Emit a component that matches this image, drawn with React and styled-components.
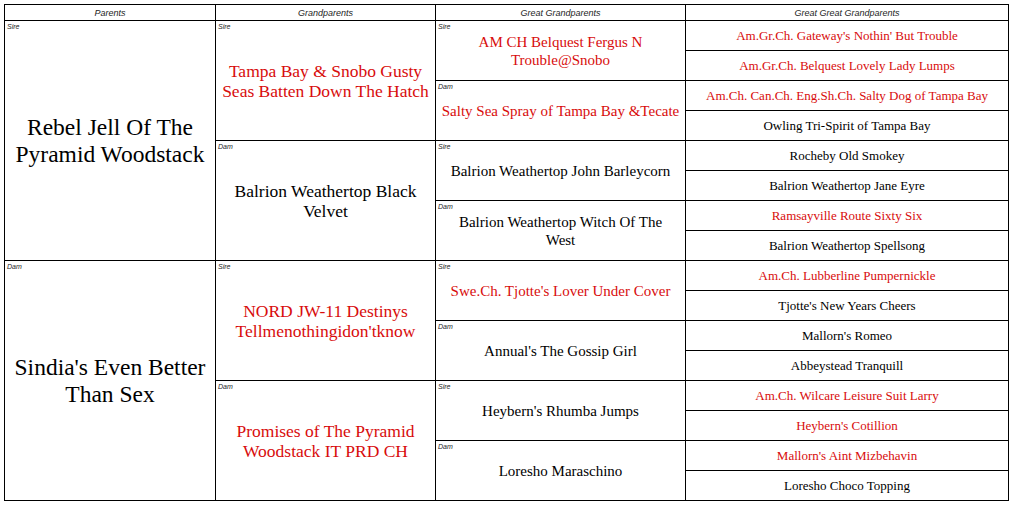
import React from "react";
import styled, { createGlobalStyle } from "styled-components";

const Global = createGlobalStyle`
  html, body { margin: 0; padding: 0; background: #fff; }
  body { padding: 4px; font-family: "Liberation Serif", "Times New Roman", serif; }
`;

const WIDTHS = [211, 220, 250, 323];
const FONT = [
  { size: 23.5, lh: 27 },
  { size: 17.5, lh: 20 },
  { size: 15, lh: 18 },
  { size: 13, lh: 16 },
];

const Table = styled.div`
  display: flex;
  flex-direction: column;
  width: 1005px;
  box-sizing: border-box;
  border-left: 1px solid #000;
  border-top: 1px solid #000;
`;

const HeaderRow = styled.div`
  display: grid;
  grid-template-columns: ${WIDTHS.map((w) => w + "px").join(" ")};
  height: 16px;
`;

const HeaderCell = styled.div`
  box-sizing: border-box;
  border-right: 1px solid #000;
  border-bottom: 1px solid #000;
  display: flex;
  align-items: center;
  justify-content: center;
  font-family: "Liberation Sans", Arial, sans-serif;
  font-style: italic;
  font-size: 9px;
  color: #222;
`;

const BranchRow = styled.div`
  display: flex;
  flex-direction: row;
`;

const Children = styled.div`
  display: flex;
  flex-direction: column;
`;

const Cell = styled.div`
  position: relative;
  box-sizing: border-box;
  flex: none;
  width: ${(p) => WIDTHS[p.$gen]}px;
  ${(p) => (p.$gen === 3 ? "height: 30px;" : "")}
  border-right: 1px solid #000;
  border-bottom: 1px solid #000;
  display: flex;
  align-items: center;
  justify-content: center;
  text-align: center;
  white-space: pre-line;
  padding: 0 ${(p) => (p.$gen === 2 ? 2 : 4)}px;
  font-family: "Liberation Serif", "Times New Roman", serif;
  font-size: ${(p) => FONT[p.$gen].size}px;
  line-height: ${(p) => FONT[p.$gen].lh}px;
  color: ${(p) => (p.$red ? "#d80c0c" : "#000")};
`;

const Name = styled.span`
  font-family: "Liberation Serif", "Times New Roman", serif;
`;

const Label = styled.span`
  position: absolute;
  top: 2px;
  left: 2px;
  font-family: "Liberation Sans", Arial, sans-serif;
  font-style: italic;
  font-size: 7px;
  line-height: 8px;
  color: #222;
`;

const n = (name, red, children) => ({ name, red, children });

const tree = [
  n("Rebel Jell Of The Pyramid Woodstack", false, [
    n("Tampa Bay & Snobo Gusty Seas Batten Down The Hatch", true, [
      n("AM CH Belquest Fergus N Trouble@Snobo", true, [
        n("Am.Gr.Ch. Gateway's Nothin' But Trouble", true),
        n("Am.Gr.Ch. Belquest Lovely Lady Lumps", true),
      ]),
      n("Salty Sea Spray of Tampa Bay &Tecate", true, [
        n("Am.Ch. Can.Ch. Eng.Sh.Ch. Salty Dog of Tampa Bay", true),
        n("Owling Tri-Spirit of Tampa Bay", false),
      ]),
    ]),
    n("Balrion Weathertop Black Velvet", false, [
      n("Balrion Weathertop John Barleycorn", false, [
        n("Rocheby Old Smokey", false),
        n("Balrion Weathertop Jane Eyre", false),
      ]),
      n("Balrion Weathertop Witch Of The\nWest", false, [
        n("Ramsayville Route Sixty Six", true),
        n("Balrion Weathertop Spellsong", false),
      ]),
    ]),
  ]),
  n("Sindia's Even Better Than Sex", false, [
    n("NORD JW-11 Destinys Tellmenothingidon'tknow", true, [
      n("Swe.Ch. Tjotte's Lover Under Cover", true, [
        n("Am.Ch. Lubberline Pumpernickle", true),
        n("Tjotte's New Years Cheers", false),
      ]),
      n("Annual's The Gossip Girl", false, [
        n("Mallorn's Romeo", false),
        n("Abbeystead Tranquill", false),
      ]),
    ]),
    n("Promises of The Pyramid Woodstack IT PRD CH", true, [
      n("Heybern's Rhumba Jumps", false, [
        n("Am.Ch. Wilcare Leisure Suit Larry", true),
        n("Heybern's Cotillion", true),
      ]),
      n("Loresho Maraschino", false, [
        n("Mallorn's Aint Mizbehavin", true),
        n("Loresho Choco Topping", false),
      ]),
    ]),
  ]),
];

function Branch({ node, gen, label }) {
  return (
    <BranchRow>
      <Cell $gen={gen} $red={node.red}>
        {gen < 3 && <Label>{label}</Label>}
        <Name>{node.name}</Name>
      </Cell>
      {node.children && (
        <Children>
          {node.children.map((c, i) => (
            <Branch key={i} node={c} gen={gen + 1} label={i === 0 ? "Sire" : "Dam"} />
          ))}
        </Children>
      )}
    </BranchRow>
  );
}

export default function App() {
  return (
    <>
      <Global />
      <Table>
        <HeaderRow>
          <HeaderCell>Parents</HeaderCell>
          <HeaderCell>Grandparents</HeaderCell>
          <HeaderCell>Great Grandparents</HeaderCell>
          <HeaderCell>Great Great Grandparents</HeaderCell>
        </HeaderRow>
        <Children>
          {tree.map((c, i) => (
            <Branch key={i} node={c} gen={0} label={i === 0 ? "Sire" : "Dam"} />
          ))}
        </Children>
      </Table>
    </>
  );
}
